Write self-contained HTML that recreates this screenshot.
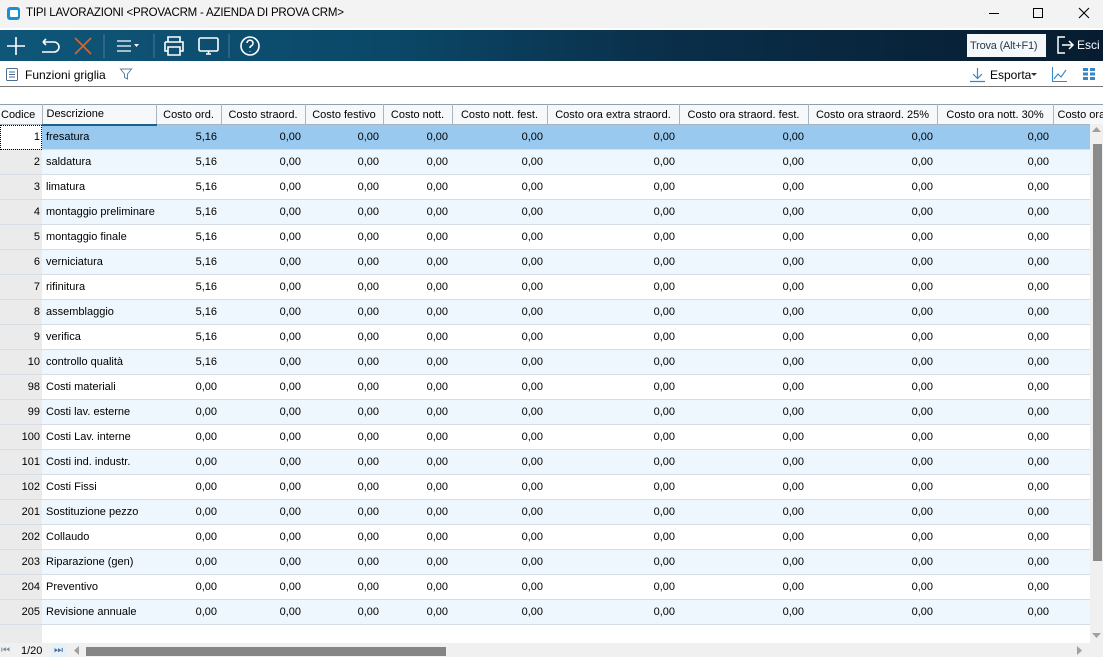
<!DOCTYPE html>
<html><head><meta charset="utf-8">
<style>
*{margin:0;padding:0;box-sizing:border-box}
body{width:1103px;height:657px;overflow:hidden;background:#fff;font-family:"Liberation Sans",Tahoma,sans-serif;font-size:11px;color:#000;position:relative}
.title{position:absolute;left:0;top:0;width:1103px;height:28px;background:#f3f3f3;font-size:12px}
.title span{position:absolute;left:26px;top:7px;font-size:11.5px;letter-spacing:-0.2px}
.tb{position:absolute;left:0;top:30px;width:1103px;height:31px;background:linear-gradient(90deg,#0f5679 0%,#0b4868 35%,#0a2f4a 60%,#071c30 100%)}
.sb{position:absolute;left:0;top:62px;width:1103px;height:25px;background:#fff;border-bottom:1px solid #777}
table{position:absolute;left:0;top:104px;border-collapse:collapse;table-layout:fixed;width:1103px}
th{height:20px;font-weight:normal;text-align:left;padding-left:4px;border:1px solid #aab5c2;border-top:1px solid #8fa0b3;background:#f7f8f9;white-space:nowrap;overflow:hidden;font-size:11px}
th.r{text-align:center;padding:0}
td{height:25px;border-bottom:1px solid #d6dde4;text-align:right;padding-right:4px;white-space:nowrap;overflow:hidden}
td.c{background:#ebebeb;text-align:right;padding-right:2px}
td.d{text-align:left;padding-left:4px}
tr.e td{background:#eef7fd}
tr.e td.c{background:#ebebeb}
tr.s td{background:#99c9ef}
tr.s td.c{background:#fff;outline:1px dotted #000;outline-offset:-1px}
</style></head><body>
<div class="title">
<svg style="position:absolute;left:6px;top:6px" width="15" height="15"><rect x="1" y="1" width="13" height="13" rx="3" fill="#1a8fd6"/><rect x="4" y="4" width="8" height="7" rx="1" fill="#fff"/></svg>
<span>TIPI LAVORAZIONI &lt;PROVACRM - AZIENDA DI PROVA CRM&gt;</span>
<div style="position:absolute;left:989px;top:13px;width:10px;height:1px;background:#000"></div>
<div style="position:absolute;left:1033px;top:8px;width:10px;height:10px;border:1px solid #000"></div>
<svg style="position:absolute;left:1078px;top:7px" width="12" height="12"><path d="M1 1L11 11M11 1L1 11" stroke="#000" stroke-width="1.1"/></svg>
</div>
<div class="tb">
<svg style="position:absolute;left:0;top:0" width="270" height="31" fill="none" stroke="#fff" stroke-width="1.6">
<path d="M16 7V25M7 16H25"/>
<path d="M43 12H54a5 5 0 0 1 0 10H42M43 12l3-3M43 12l3 3" />
<path d="M75 8L91 24M91 8L75 24" stroke="#d9652a"/>
<line x1="104" y1="4" x2="104" y2="28" stroke="#4a7a96" stroke-width="1"/>
<path d="M117 11H131M117 16H131M117 21H131" stroke-width="1.3"/>
<path d="M134 14h5l-2.5 3z" fill="#fff" stroke="none"/>
<line x1="154" y1="4" x2="154" y2="28" stroke="#4a7a96" stroke-width="1"/>
<path d="M168 12V7h12v5M165 12h18v9h-3M168 21h-3v-9M168 17h12v8h-12z"/>
<rect x="199" y="8" width="19" height="13" rx="1.5"/><path d="M206 24h5M208.5 21v3"/>
<line x1="229" y1="4" x2="229" y2="28" stroke="#4a7a96" stroke-width="1"/>
<circle cx="250" cy="16" r="9"/><path d="M247 13a3 3 0 1 1 4 3c-1 .6-1 1-1 2M250 21v.5"/>
</svg>
<div style="position:absolute;left:967px;top:4px;width:79px;height:23px;background:#f4f8fb;color:#2a3a4a;font-size:11px;padding:6px 0 0 3px;white-space:nowrap;overflow:hidden;letter-spacing:-0.2px">Trova (Alt+F1)</div>
<svg style="position:absolute;left:1055px;top:5px" width="20" height="20" fill="none" stroke="#fff" stroke-width="1.5"><path d="M10 2H3v16h7"/><path d="M7 10h11M14 6l4 4-4 4"/></svg>
<span style="position:absolute;left:1077px;top:8px;color:#fff;font-size:12px">Esci</span>
</div>
<div class="sb">
<svg style="position:absolute;left:5px;top:5px" width="14" height="15" fill="none" stroke="#4a6f96"><rect x="1.5" y="1.5" width="11" height="12" rx="1"/><path d="M4 5h6M4 7.5h6M4 10h6"/></svg>
<span style="position:absolute;left:25px;top:6px;font-size:12px">Funzioni griglia</span>
<svg style="position:absolute;left:119px;top:5px" width="14" height="14" fill="none" stroke="#5a7fa6"><path d="M1.5 2h11l-4 5v5l-3-1.5V7z"/></svg>
<svg style="position:absolute;left:969px;top:5px" width="17" height="16" fill="none" stroke="#3a86c4" stroke-width="1.2"><path d="M8.5 1v10M4 7l4.5 4.5L13 7M1 14.5h15"/></svg>
<span style="position:absolute;left:990px;top:6px;font-size:12px">Esporta</span>
<svg style="position:absolute;left:1031px;top:11px" width="6" height="4"><path d="M0 0h6L3 3z" fill="#333"/></svg>
<svg style="position:absolute;left:1051px;top:4px" width="17" height="17" fill="none" stroke="#3a86c4" stroke-width="1.1"><path d="M1.5 1v14.5H16M3 13l4-5 3 3 5-7"/></svg>
<svg style="position:absolute;left:1083px;top:6px" width="12" height="12" fill="#3a86c4"><rect x="0" y="0" width="5" height="3"/><rect x="7" y="0" width="5" height="3"/><rect x="0" y="4.5" width="5" height="3"/><rect x="7" y="4.5" width="5" height="3"/><rect x="0" y="9" width="5" height="3"/><rect x="7" y="9" width="5" height="3"/></svg>
</div>
<table>
<colgroup><col style="width:42px"><col style="width:114px"><col style="width:65px"><col style="width:84px"><col style="width:78px"><col style="width:69px"><col style="width:95px"><col style="width:132px"><col style="width:129px"><col style="width:129px"><col style="width:116px"><col style="width:50px"></colgroup>
<tr><th style="padding-left:1px;border-left:0">Codice</th><th style="border-bottom:2px solid #1f5f8b">Descrizione</th><th class="r">Costo ord.</th><th class="r">Costo straord.</th><th class="r">Costo festivo</th><th class="r">Costo nott.</th><th class="r">Costo nott. fest.</th><th class="r">Costo ora extra straord.</th><th class="r">Costo ora straord. fest.</th><th class="r">Costo ora straord. 25%</th><th class="r">Costo ora nott. 30%</th><th>Costo ora</th></tr>
<tr class="s"><td class="c">1</td><td class="d">fresatura</td><td>5,16</td><td>0,00</td><td>0,00</td><td>0,00</td><td>0,00</td><td>0,00</td><td>0,00</td><td>0,00</td><td>0,00</td><td></td></tr>
<tr class="e"><td class="c">2</td><td class="d">saldatura</td><td>5,16</td><td>0,00</td><td>0,00</td><td>0,00</td><td>0,00</td><td>0,00</td><td>0,00</td><td>0,00</td><td>0,00</td><td></td></tr>
<tr><td class="c">3</td><td class="d">limatura</td><td>5,16</td><td>0,00</td><td>0,00</td><td>0,00</td><td>0,00</td><td>0,00</td><td>0,00</td><td>0,00</td><td>0,00</td><td></td></tr>
<tr class="e"><td class="c">4</td><td class="d">montaggio preliminare</td><td>5,16</td><td>0,00</td><td>0,00</td><td>0,00</td><td>0,00</td><td>0,00</td><td>0,00</td><td>0,00</td><td>0,00</td><td></td></tr>
<tr><td class="c">5</td><td class="d">montaggio finale</td><td>5,16</td><td>0,00</td><td>0,00</td><td>0,00</td><td>0,00</td><td>0,00</td><td>0,00</td><td>0,00</td><td>0,00</td><td></td></tr>
<tr class="e"><td class="c">6</td><td class="d">verniciatura</td><td>5,16</td><td>0,00</td><td>0,00</td><td>0,00</td><td>0,00</td><td>0,00</td><td>0,00</td><td>0,00</td><td>0,00</td><td></td></tr>
<tr><td class="c">7</td><td class="d">rifinitura</td><td>5,16</td><td>0,00</td><td>0,00</td><td>0,00</td><td>0,00</td><td>0,00</td><td>0,00</td><td>0,00</td><td>0,00</td><td></td></tr>
<tr class="e"><td class="c">8</td><td class="d">assemblaggio</td><td>5,16</td><td>0,00</td><td>0,00</td><td>0,00</td><td>0,00</td><td>0,00</td><td>0,00</td><td>0,00</td><td>0,00</td><td></td></tr>
<tr><td class="c">9</td><td class="d">verifica</td><td>5,16</td><td>0,00</td><td>0,00</td><td>0,00</td><td>0,00</td><td>0,00</td><td>0,00</td><td>0,00</td><td>0,00</td><td></td></tr>
<tr class="e"><td class="c">10</td><td class="d">controllo qualità</td><td>5,16</td><td>0,00</td><td>0,00</td><td>0,00</td><td>0,00</td><td>0,00</td><td>0,00</td><td>0,00</td><td>0,00</td><td></td></tr>
<tr><td class="c">98</td><td class="d">Costi materiali</td><td>0,00</td><td>0,00</td><td>0,00</td><td>0,00</td><td>0,00</td><td>0,00</td><td>0,00</td><td>0,00</td><td>0,00</td><td></td></tr>
<tr class="e"><td class="c">99</td><td class="d">Costi lav. esterne</td><td>0,00</td><td>0,00</td><td>0,00</td><td>0,00</td><td>0,00</td><td>0,00</td><td>0,00</td><td>0,00</td><td>0,00</td><td></td></tr>
<tr><td class="c">100</td><td class="d">Costi Lav. interne</td><td>0,00</td><td>0,00</td><td>0,00</td><td>0,00</td><td>0,00</td><td>0,00</td><td>0,00</td><td>0,00</td><td>0,00</td><td></td></tr>
<tr class="e"><td class="c">101</td><td class="d">Costi ind. industr.</td><td>0,00</td><td>0,00</td><td>0,00</td><td>0,00</td><td>0,00</td><td>0,00</td><td>0,00</td><td>0,00</td><td>0,00</td><td></td></tr>
<tr><td class="c">102</td><td class="d">Costi Fissi</td><td>0,00</td><td>0,00</td><td>0,00</td><td>0,00</td><td>0,00</td><td>0,00</td><td>0,00</td><td>0,00</td><td>0,00</td><td></td></tr>
<tr class="e"><td class="c">201</td><td class="d">Sostituzione pezzo</td><td>0,00</td><td>0,00</td><td>0,00</td><td>0,00</td><td>0,00</td><td>0,00</td><td>0,00</td><td>0,00</td><td>0,00</td><td></td></tr>
<tr><td class="c">202</td><td class="d">Collaudo</td><td>0,00</td><td>0,00</td><td>0,00</td><td>0,00</td><td>0,00</td><td>0,00</td><td>0,00</td><td>0,00</td><td>0,00</td><td></td></tr>
<tr class="e"><td class="c">203</td><td class="d">Riparazione (gen)</td><td>0,00</td><td>0,00</td><td>0,00</td><td>0,00</td><td>0,00</td><td>0,00</td><td>0,00</td><td>0,00</td><td>0,00</td><td></td></tr>
<tr><td class="c">204</td><td class="d">Preventivo</td><td>0,00</td><td>0,00</td><td>0,00</td><td>0,00</td><td>0,00</td><td>0,00</td><td>0,00</td><td>0,00</td><td>0,00</td><td></td></tr>
<tr class="e"><td class="c">205</td><td class="d">Revisione annuale</td><td>0,00</td><td>0,00</td><td>0,00</td><td>0,00</td><td>0,00</td><td>0,00</td><td>0,00</td><td>0,00</td><td>0,00</td><td></td></tr>
</table>
<div style="position:absolute;left:0;top:625px;width:42px;height:18px;background:#ebebeb"></div>
<div style="position:absolute;left:1090px;top:124px;width:13px;height:519px;background:#f0f0f0"></div>
<svg style="position:absolute;left:1092px;top:127px" width="9" height="6"><path d="M0 5L4.5 0 9 5z" fill="#a0a0a0"/></svg>
<div style="position:absolute;left:1093px;top:144px;width:9px;height:417px;background:#8a8a8a"></div>
<svg style="position:absolute;left:1092px;top:633px" width="9" height="6"><path d="M0 0L4.5 5 9 0z" fill="#a0a0a0"/></svg>
<div style="position:absolute;left:0;top:643px;width:1103px;height:14px;background:#f0f0f0"></div>
<div style="position:absolute;left:52px;top:643px;width:15px;height:14px;background:#e6f0f8"></div>
<span style="position:absolute;left:1px;top:645px;font-size:10px;color:#7a8ea3">⏮</span>
<span style="position:absolute;left:21px;top:645px;font-size:11px">1/20</span>
<span style="position:absolute;left:54px;top:645px;font-size:10px;color:#4a6f96">⏭</span>
<svg style="position:absolute;left:74px;top:646px" width="6" height="9"><path d="M5 0L0 4.5 5 9z" fill="#a0a0a0"/></svg>
<div style="position:absolute;left:86px;top:647px;width:360px;height:9px;background:#858585"></div>
<svg style="position:absolute;left:1077px;top:646px" width="6" height="9"><path d="M0 0L5 4.5 0 9z" fill="#a0a0a0"/></svg>
</body></html>
